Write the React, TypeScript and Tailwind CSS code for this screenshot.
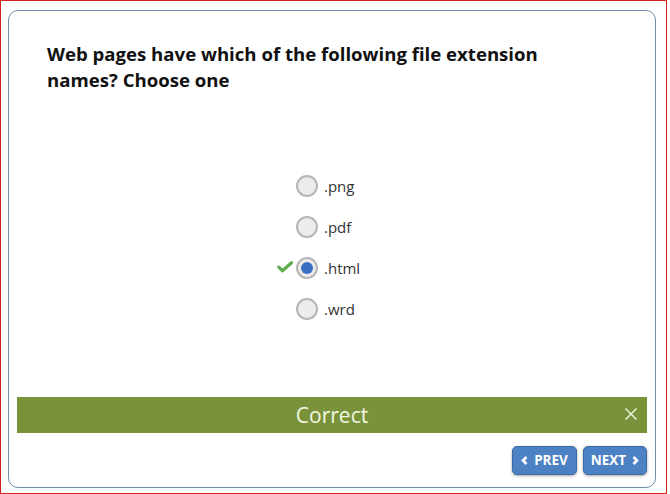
import { useState } from "react";

const options = [".png", ".pdf", ".html", ".wrd"];

function Chevron({ dir }: { dir: "left" | "right" }) {
  return (
    <svg width="7" height="9" viewBox="0 0 7 9" className="shrink-0">
      <path
        d={dir === "left" ? "M5.5 1 L2 4.5 L5.5 8" : "M1.5 1 L5 4.5 L1.5 8"}
        fill="none"
        stroke="white"
        strokeWidth="2.6"
      />
    </svg>
  );
}

export default function App() {
  const [selected, setSelected] = useState(2);
  const [open, setOpen] = useState(true);

  return (
    <div className="h-[494px] w-[667px] border border-[#d42020] bg-white font-['Open_Sans',sans-serif]">
      <div className="ml-[7px] mt-[9px] flex h-[478px] w-[648px] flex-col rounded-[10px] border border-[#6f8cab] bg-white">
        <h1 className="ml-[38px] mt-[30px] w-[540px] text-[18.6px] font-bold leading-[26px] text-[#111]">
          Web pages have which of the following file extension names? Choose one
        </h1>

        <div className="mt-[82px] flex flex-col items-center gap-[19px] pl-[20px]">
          {options.map((label, i) => (
            <label
              key={label}
              className="relative flex h-[22px] w-[92px] cursor-pointer items-center gap-[6px]"
              onClick={() => setSelected(i)}
            >
              {i === 2 && (
                <svg
                  width="16"
                  height="12"
                  viewBox="0 0 16 12"
                  className="absolute left-[-19px] top-[4px]"
                >
                  <path
                    d="M1.8 6.2 L5.5 9.8 L14.5 1.8"
                    fill="none"
                    stroke="#5fae4e"
                    strokeWidth="3.2"
                    strokeLinecap="round"
                    strokeLinejoin="round"
                  />
                </svg>
              )}
              <span className="flex h-[22px] w-[22px] items-center justify-center rounded-full border-2 border-[#b5b5b5] bg-[#ececec]">
                {selected === i && (
                  <span className="h-[12px] w-[12px] rounded-full bg-[#3b6fc2]" />
                )}
              </span>
              <span className="text-[15px] text-[#333]">{label}</span>
            </label>
          ))}
        </div>

        <div className="mt-auto">
          {open && (
            <div className="relative mx-[8px] flex h-[36px] items-center justify-center bg-[#7a933b]">
              <span className="text-[21px] leading-none text-[#f2f7e4]">Correct</span>
              <button
                type="button"
                onClick={() => setOpen(false)}
                className="absolute right-[9px] top-[10px]"
              >
                <svg width="14" height="14" viewBox="0 0 14 14">
                  <path d="M1.5 1.5 L12.5 12.5 M12.5 1.5 L1.5 12.5" stroke="#f2f7e4" strokeWidth="1.4" />
                </svg>
              </button>
            </div>
          )}
          <div className="mb-[12px] mr-[8px] mt-[13px] flex justify-end gap-[6px]">
            <button
              type="button"
              className="flex h-[29px] w-[65px] items-center justify-center gap-[6px] rounded-[5px] border border-[#3a6aa6] bg-[#4c82c3] text-[13.5px] font-bold text-white shadow-[0_1px_3px_rgba(0,0,0,0.35)]"
            >
              <Chevron dir="left" />
              PREV
            </button>
            <button
              type="button"
              className="flex h-[29px] w-[64px] items-center justify-center gap-[6px] rounded-[5px] border border-[#3a6aa6] bg-[#4c82c3] text-[13.5px] font-bold text-white shadow-[0_1px_3px_rgba(0,0,0,0.35)]"
            >
              NEXT
              <Chevron dir="right" />
            </button>
          </div>
        </div>
      </div>
    </div>
  );
}
